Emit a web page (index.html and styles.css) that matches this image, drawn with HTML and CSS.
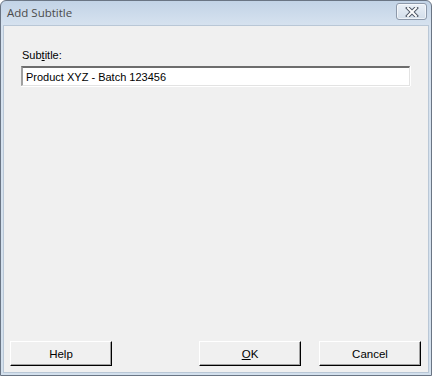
FILE: index.html
```html
<!DOCTYPE html>
<html>
<head>
    <meta charset="utf-8"/>
    <title>Add Subtitle</title>
    <link rel="stylesheet" href="styles.css">
</head>
<body>

<div class="window">
    <div class="titlebar">
        <span class="title">Add Subtitle</span>
        <span class="close-btn">
            <svg width="16" height="10" viewBox="0 0 16 10">
                <path d="M4 1 L12 9 M12 1 L4 9" stroke="#4f5866" stroke-width="4" stroke-linecap="square"/>
                <path d="M4 1 L12 9 M12 1 L4 9" stroke="#ffffff" stroke-width="2" stroke-linecap="square"/>
            </svg>
        </span>
    </div>
    <div class="client">
        <div class="field">
            <label class="field-label">Sub<u>t</u>itle:</label>
            <div class="textbox">Product XYZ - Batch 123456</div>
        </div>
        <div class="buttons">
            <span class="btn">Help</span>
            <span class="spacer"></span>
            <span class="btn"><u>O</u>K</span>
            <span class="btn">Cancel</span>
        </div>
    </div>
</div>

</body>
</html>
```

FILE: styles.css
```css
body {
    margin: 0;
    background: #ffffff;
    font-family: "Liberation Sans", Arial, sans-serif;
    font-size: 11px;
    color: #000;
}

.window {
    box-sizing: border-box;
    width: 432px;
    height: 376px;
    display: flex;
    flex-direction: column;
    border: 1px solid #6a7584;
    border-radius: 6px 6px 0 0;
    background: linear-gradient(to bottom, #c2d3e6 0px, #d6e2ef 24px, #d3e0ed 100%);
}

.titlebar {
    height: 24px;
    display: flex;
    align-items: center;
    padding: 0 4px 0 6px;
}

.title {
    flex: 1;
    font-family: "Open Sans", "Liberation Sans", sans-serif;
    font-size: 11.5px;
    color: #4b4b4b;
    margin-top: -2px;
}

.close-btn {
    box-sizing: border-box;
    width: 31px;
    height: 17px;
    margin-top: -3px;
    display: flex;
    align-items: center;
    justify-content: center;
    border: 1px solid #8d99aa;
    border-radius: 3px;
    background: linear-gradient(to bottom, #eaf0f7, #d3deea);
    box-shadow: inset 0 0 0 1px rgba(255, 255, 255, 0.6);
}

.client {
    flex: 1;
    display: flex;
    flex-direction: column;
    margin: 0 2px 2px 2px;
    padding: 0 7px 6px 6px;
    background: #f0f0f0;
    border: 1px solid #b9c7d6;
}

.field {
    flex: 1;
    padding: 23px 11px 0 11px;
}

.field-label {
    display: block;
    height: 17px;
    padding-left: 1px;
}

.textbox {
    box-sizing: border-box;
    height: 20px;
    padding: 2px 3px;
    line-height: 14px;
    font-size: 11px;
    background: #ffffff;
    border-style: solid;
    border-width: 2px 1px 1px 2px;
    border-color: #6d6d6d #e3e3e3 #e3e3e3 #a0a0a0;
    box-shadow: 0 1px 0 #ffffff, 1px 0 0 #ffffff;
}

.buttons {
    display: flex;
    gap: 18px;
}

.spacer {
    flex: 1;
}

.btn {
    box-sizing: border-box;
    width: 102px;
    height: 25px;
    display: flex;
    align-items: center;
    justify-content: center;
    font-size: 11.5px;
    background: #f0f0f0;
    border-style: solid;
    border-width: 1px;
    border-color: #ffffff #000000 #000000 #ffffff;
    box-shadow: inset -1px -1px 0 #a0a0a0;
}
```
